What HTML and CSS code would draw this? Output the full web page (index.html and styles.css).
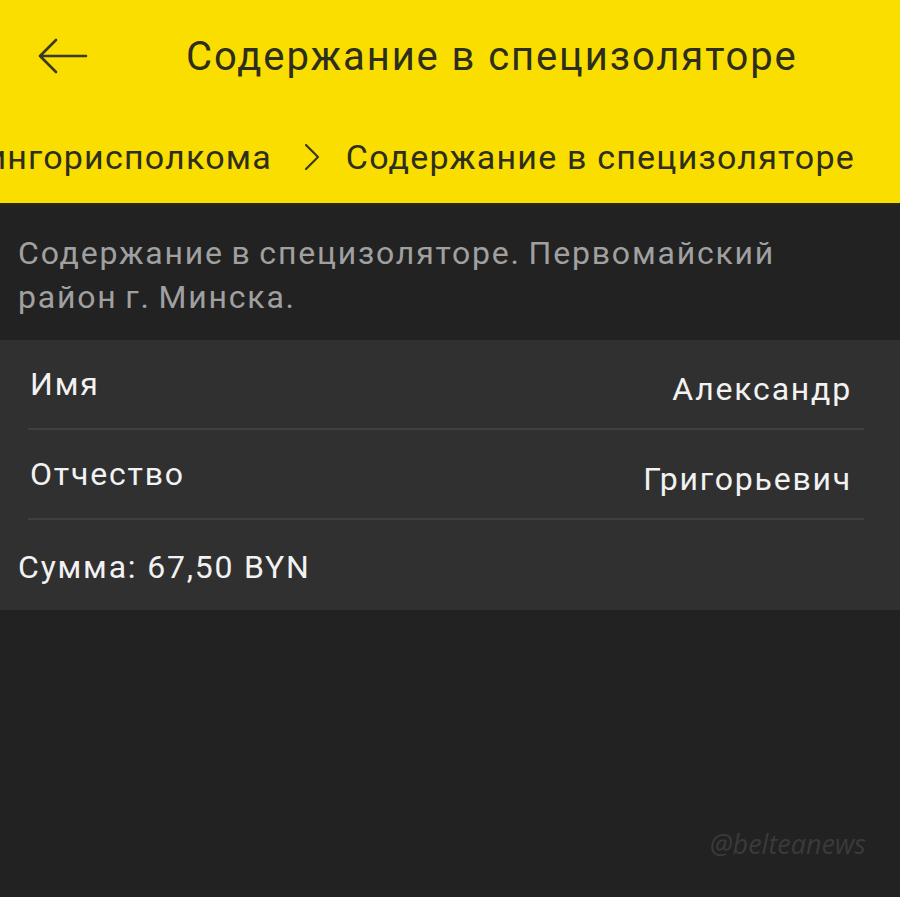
FILE: index.html
```html
<!DOCTYPE html>
<html lang="ru">
<head>
<meta charset="utf-8">
<link rel="stylesheet" href="styles.css">
</head>
<body>
<div class="header">
  <div class="topbar">
    <svg class="back" width="52" height="40" viewBox="0 0 52 40"><path d="M50 20H4M20 4L4 20L20 36" fill="none" stroke="#3a3a20" stroke-width="2.6" stroke-linecap="round" stroke-linejoin="round"/></svg>
    <div class="title">Содержание в специзоляторе</div>
  </div>
  <div class="crumbs">
    <span class="crumb">Мингорисполкома</span>
    <svg class="chev" width="16" height="28" viewBox="0 0 16 28"><path d="M2 2L14 14L2 26" fill="none" stroke="#3a3a20" stroke-width="2.2" stroke-linecap="round" stroke-linejoin="round"/></svg>
    <span class="crumb">Содержание в специзоляторе</span>
  </div>
</div>
<div class="desc">Содержание в специзоляторе. Первомайский район г. Минска.</div>
<div class="card">
  <div class="row"><span class="label">Имя</span><span class="value">Александр</span></div>
  <div class="row"><span class="label">Отчество</span><span class="value">Григорьевич</span></div>
  <div class="sum">Сумма: 67,50 BYN</div>
</div>
<div class="watermark">@belteanews</div>
</body>
</html>
```
FILE: styles.css
```css
html, body { margin: 0; padding: 0; }
body {
  width: 900px;
  height: 897px;
  background: #222222;
  font-family: Roboto, "Noto Sans", sans-serif;
  overflow: hidden;
  position: relative;
}
.header {
  background: #f9de00;
  height: 205px;
  box-sizing: border-box;
  border-bottom: 2px solid #2a2a1a;
  overflow: hidden;
}
.topbar {
  display: flex;
  align-items: center;
  height: 112px;
  padding-left: 36px;
}
.back { flex-shrink: 0; }
.title {
  margin-left: 98px;
  font-size: 40px;
  color: #2e2e1e;
  letter-spacing: 1.9px;
}
.crumbs {
  display: flex;
  justify-content: flex-end;
  align-items: center;
  padding-right: 45px;
  height: 90px;
  white-space: nowrap;
}
.crumb {
  flex-shrink: 0;
  font-size: 34px;
  color: #2e2e1e;
  letter-spacing: 1.2px;
}
.chev { flex-shrink: 0; margin: 0 26px 0 32px; }
.desc {
  padding: 26px 80px 0 18px;
  font-size: 32px;
  line-height: 44px;
  color: #a0a0a0;
  height: 135px;
  box-sizing: border-box;
  letter-spacing: 1.8px;
  word-spacing: -2px;
}
.card {
  background: #303030;
  height: 270px;
  box-sizing: border-box;
}
.row {
  display: flex;
  justify-content: space-between;
  align-items: center;
  margin: 0 36px 0 28px;
  height: 90px;
  padding-top: 9px;
  border-bottom: 2px solid #3f3f3f;
  box-sizing: border-box;
}
.label { font-size: 32px; color: #f2f2f2; padding-left: 2px; margin-top: -10px; letter-spacing: 1.8px; }
.value { font-size: 32px; color: #f2f2f2; padding-right: 12px; letter-spacing: 1.8px; }
.sum {
  padding-left: 18px;
  padding-top: 5px;
  height: 88px;
  box-sizing: border-box;
  display: flex;
  align-items: center;
  font-size: 32px;
  color: #f2f2f2;
  letter-spacing: 1.8px;
}
.watermark {
  position: absolute;
  right: 34px;
  top: 825px;
  font-size: 27px;
  font-style: italic;
  color: #3a3a3a;
  font-family: "Open Sans", sans-serif;
}
```
